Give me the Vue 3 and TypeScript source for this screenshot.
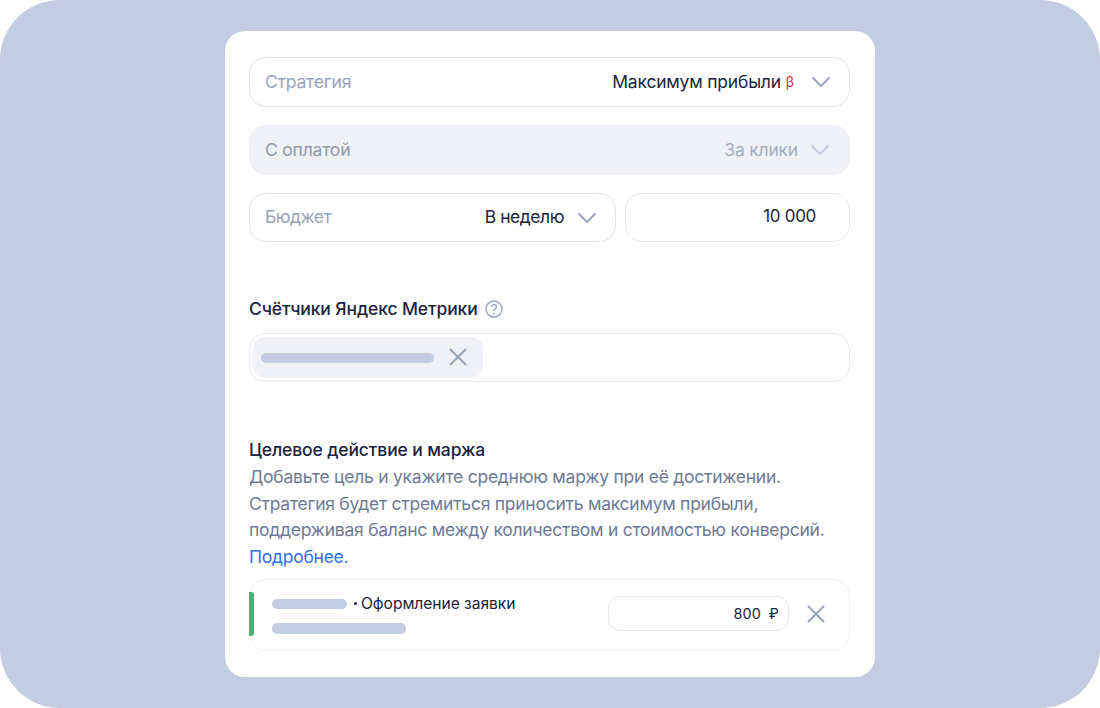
<script setup lang="ts">
const lines: string[] = [
  'Добавьте цель и укажите среднюю маржу при её достижении.',
  'Стратегия будет стремиться приносить максимум прибыли,',
  'поддерживая баланс между количеством и стоимостью конверсий.',
]
</script>

<template>
  <div class="stage">
    <div class="card">
      <div class="field bordered">
        <span class="label">Стратегия</span>
        <span class="value">Максимум прибыли<sup class="beta">β</sup></span>
        <svg class="chev" viewBox="0 0 20 12"><path d="M1.5 1.5 10 10l8.5-8.5" /></svg>
      </div>
      <div class="field muted">
        <span class="label">С оплатой</span>
        <span class="value dim">За клики</span>
        <svg class="chev light" viewBox="0 0 20 12"><path d="M1.5 1.5 10 10l8.5-8.5" /></svg>
      </div>
      <div class="budget">
        <div class="field bordered grow">
          <span class="label">Бюджет</span>
          <span class="value">В неделю</span>
          <svg class="chev" viewBox="0 0 20 12"><path d="M1.5 1.5 10 10l8.5-8.5" /></svg>
        </div>
        <div class="field thin amount">10 000</div>
      </div>

      <div class="title counters">
        Счётчики Яндекс Метрики
        <svg class="help" viewBox="0 0 18 18">
          <circle cx="9" cy="9" r="8" />
          <path d="M6.6 7.1a2.4 2.4 0 1 1 3.7 2c-.9.6-1.3 1-1.3 2" />
          <circle class="dot" cx="9" cy="13.4" r=".9" />
        </svg>
      </div>
      <div class="tags">
        <div class="tag">
          <span class="bar tag-bar"></span>
          <svg class="close" viewBox="0 0 20 20"><path d="M2 2l16 16M18 2 2 18" /></svg>
        </div>
      </div>

      <div class="title goal-title">Целевое действие и маржа</div>
      <p class="desc">
        <span v-for="line in lines" :key="line" class="line">{{ line }}</span>
        <a class="line link">Подробнее.</a>
      </p>

      <div class="goal">
        <span class="accent"></span>
        <div class="goal-info">
          <div class="goal-row">
            <span class="bar short"></span>
            <span class="goal-name"><i class="bullet"></i>Оформление заявки</span>
          </div>
          <span class="bar long"></span>
        </div>
        <div class="margin"><span>800</span><span class="rub">₽</span></div>
        <svg class="close goal-close" viewBox="0 0 20 20"><path d="M2 2l16 16M18 2 2 18" /></svg>
      </div>
    </div>
  </div>
</template>

<style>
html, body { margin: 0; background: #fff; }
</style>

<style scoped>
.stage {
  width: 1100px;
  height: 708px;
  box-sizing: border-box;
  padding-top: 31px;
  background: #c2cde2;
  border-radius: 60px;
  font-family: Inter, "Noto Sans", sans-serif;
  color: #1a2340;
  overflow: hidden;
}
.card {
  width: 650px;
  height: 646px;
  box-sizing: border-box;
  margin: 0 auto;
  padding: 26px 25px 0 24px;
  background: #fff;
  border-radius: 20px;
}
.field {
  display: flex;
  align-items: center;
  height: 50px;
  box-sizing: border-box;
  padding: 0 18px 2px 15px;
  border-radius: 17px;
  font-size: 17.5px;
  letter-spacing: -0.2px;
}
.bordered { border: 1.5px solid #e2e6ef; }
.muted { margin: 18px 0; background: #eff1f6; padding-left: 16px; padding-right: 20px; }
.label { color: #98a3b9; }
.muted .label { color: #8e99b0; }
.value { margin-left: auto; margin-right: 17px; }
.dim { color: #a3adc1; margin-right: 12px; }
.beta { color: #e0352b; font-size: 14px; margin-left: 5px; line-height: 0; vertical-align: 1px; }
.chev { width: 20px; height: 12px; margin-top: 2px; fill: none; stroke: #98a3b9; stroke-width: 1.8; }
.chev.light { stroke: #c2cade; }
.budget { display: flex; gap: 9px; height: 49px; }
.budget .field { height: 49px; }
.grow { width: 367px; }
.grow .label { letter-spacing: -0.5px; }
.grow .value { margin-right: 13px; letter-spacing: -0.45px; }
.thin { border: 1px solid #e8ebf2; }
.amount { flex: 1; justify-content: flex-end; padding: 0 33px 3px 0; font-size: 17px; letter-spacing: -0.3px; }
.title { font-size: 17.5px; font-weight: 500; letter-spacing: -0.12px; line-height: 24px; }
.counters { display: flex; align-items: center; gap: 7px; margin-top: 55px; }
.help { width: 18px; height: 18px; fill: none; stroke: #98a3b9; stroke-width: 1.4; }
.help .dot { fill: #98a3b9; stroke: none; }
.tags {
  display: flex;
  align-items: center;
  height: 49px;
  box-sizing: border-box;
  margin-top: 12px;
  padding-left: 3px;
  border: 1px solid #e8ebf2;
  border-radius: 17px;
}
.tag {
  display: flex;
  align-items: center;
  width: 230px;
  height: 41px;
  box-sizing: border-box;
  padding-left: 8px;
  background: #eff1f6;
  border-radius: 12px;
}
.bar { display: block; height: 10px; background: #c2cde2; border-radius: 5px; }
.tag-bar { width: 173px; }
.close { width: 20px; height: 20px; fill: none; stroke: #98a3b9; stroke-width: 2; }
.tag .close { margin-left: 14px; margin-bottom: 1px; }
.goal-title { margin-top: 56px; }
.desc { margin: 2px 0 0; font-size: 17.5px; letter-spacing: -0.25px; line-height: 26.7px; color: #6f7a94; }
.line { display: block; white-space: nowrap; }
.link { color: #2f6fed; }
.goal {
  position: relative;
  display: flex;
  align-items: center;
  height: 72px;
  box-sizing: border-box;
  margin-top: 8px;
  padding: 0 0 2px 22px;
  border: 1px solid #f0f2f6;
  border-radius: 17px;
}
.accent {
  position: absolute;
  left: -1px;
  top: 12px;
  width: 5px;
  height: 44px;
  background: #4fae72;
  border-radius: 0 3px 3px 0;
}
.goal-info { width: 336px; }
.goal-row { display: flex; align-items: center; height: 20px; }
.short { width: 75px; }
.long { width: 134px; margin-top: 9px; height: 11px; }
.goal-name { display: flex; align-items: center; margin-left: 7px; font-size: 15.6px; letter-spacing: -0.05px; }
.bullet { width: 3px; height: 3px; margin-right: 4px; background: #1a2340; border-radius: 50%; }
.margin {
  display: flex;
  justify-content: flex-end;
  align-items: center;
  gap: 8px;
  width: 181px;
  height: 35px;
  box-sizing: border-box;
  padding-right: 9px;
  border: 1px solid #e8ebf2;
  border-radius: 12px;
  font-size: 14.5px;
}
.goal-close { margin-left: 17px; }
</style>
